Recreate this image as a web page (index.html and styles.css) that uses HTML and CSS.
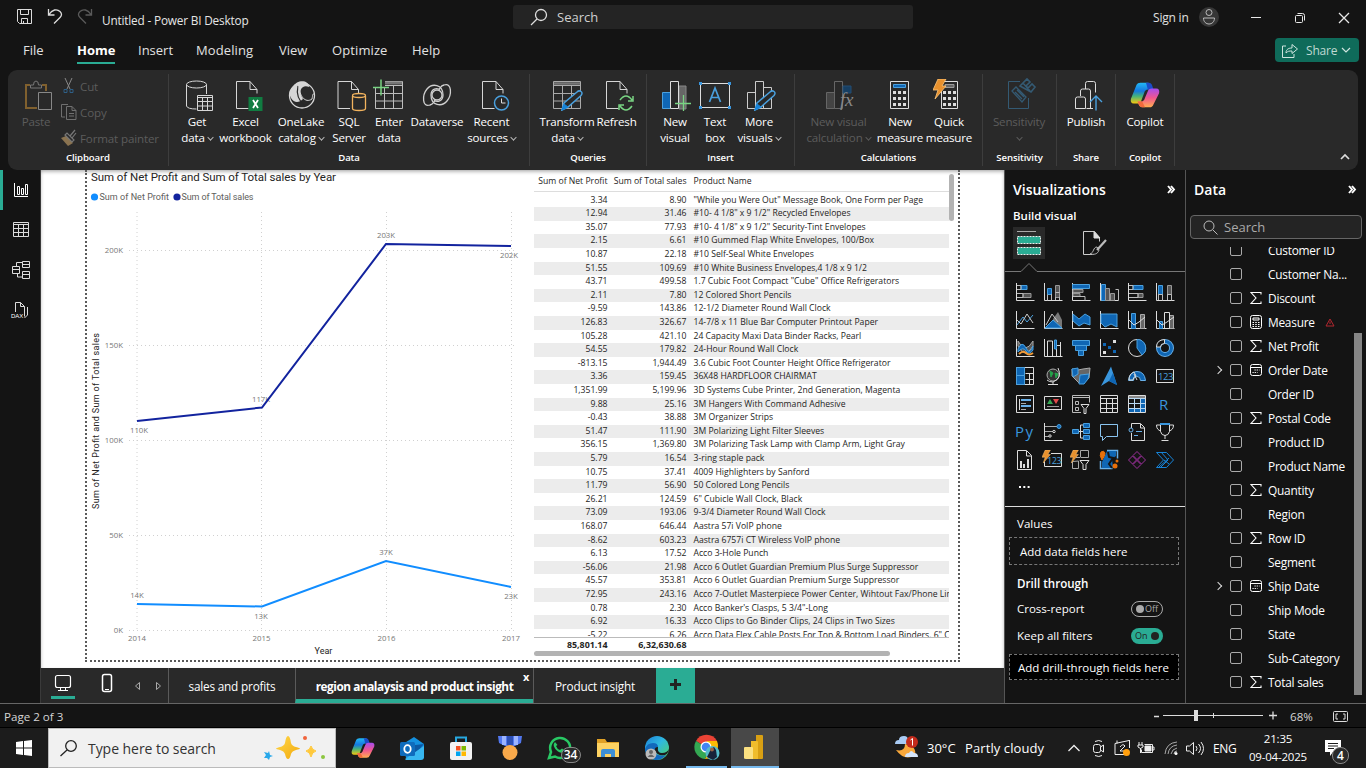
FILE: index.html
```html
<!DOCTYPE html>
<html lang="en">
<head>
<meta charset="utf-8">
<title>Untitled - Power BI Desktop</title>
<link rel="stylesheet" href="styles.css">
</head>
<body>
<svg class="defs" width="0" height="0">
<defs>
<linearGradient id="cpA" x1="0" y1="0" x2="0" y2="1"><stop offset="0" stop-color="#22b8f5"/><stop offset=".4" stop-color="#1578e0"/><stop offset=".65" stop-color="#46b37a"/><stop offset="1" stop-color="#f6c90e"/></linearGradient>
<linearGradient id="cpB" x1="0" y1="0" x2="0" y2="1"><stop offset="0" stop-color="#a44cf0"/><stop offset=".5" stop-color="#f0568f"/><stop offset="1" stop-color="#ffae50"/></linearGradient>
<linearGradient id="gold" x1="0" y1="0" x2="1" y2="1"><stop offset="0" stop-color="#ffd84a"/><stop offset="1" stop-color="#f2a90c"/></linearGradient>
<linearGradient id="edge" x1="0" y1="0" x2="1" y2="1"><stop offset="0" stop-color="#1c7fd8"/><stop offset=".45" stop-color="#2fb8e0"/><stop offset="1" stop-color="#52d35a"/></linearGradient>
<symbol id="doc" viewBox="0 0 32 32"><path d="M6.500 2.500h13.500l7 8v4M20 2.500v8h7M6.500 2.500v27h12" fill="none" stroke="#d6d6d6"/></symbol>
<symbol id="sigma" viewBox="0 0 12 12"><path d="M11 2.500v-2H1l5 5.500-5 5.500h10v-2" fill="none" stroke="#fff" stroke-width="1.100"/></symbol>
<symbol id="calc" viewBox="0 0 12 14"><rect x=".5" y=".5" width="11" height="13" rx="2" fill="none" stroke="#fff"/><path d="M3 3h6v2H3z" fill="none" stroke="#fff"/><path d="M2.500 7.500h7M2.500 9.500h7M2.500 11.500h7" stroke="#fff" stroke-dasharray="1.500 1.250"/></symbol>
<symbol id="cal" viewBox="0 0 12 12"><rect x=".5" y=".5" width="11" height="11" rx="2" fill="none" stroke="#fff"/><path d="M.5 3.500h11" stroke="#fff"/><path d="M4.500 6h5M2.500 8.500h5" stroke="#fff" stroke-dasharray="1.200 1"/></symbol>
<symbol id="copilot" viewBox="0 0 32 28"><path d="M7 3Q8 1 11 1h8q3 0 4 4l1 3h-5q-3 0-4 4l-3 8q-1 3-4 3H4q-4 0-3-5z" fill="url(#cpA)"/><path d="M17 1h3q3 0 4 4l1 3h-6q-1-4-2-7z" fill="#1b4cc9"/><path d="M25 24q-1 3-4 3h-8q-3 0-4-4l-1-2h4q3 0 4-4l3-7q1-3 4-3h5q4 0 3 5z" fill="url(#cpB)"/><path d="M13 27q-3 0-4-4l-1-2h5l3 6z" fill="#f06a3c"/></symbol>
<symbol id="bolt" viewBox="0 0 14 20"><path d="M5 0h8l-4 7h4L2 20l3-9H0z" fill="#e8912d" stroke="#ffc67a" stroke-width=".8"/></symbol>
<symbol id="pencil" viewBox="0 0 22 21"><path d="M1 20l2-7L16 2q2-2 4-.5t0 4L7 17z" fill="#292929" stroke="#4aa0de" stroke-width="1.500"/><path d="M1 20l2-6 4 3z" fill="#1683d8" stroke="#1683d8"/></symbol>
</defs>
</svg>

<header class="titlebar">
  <svg class="quick" width="80" height="20" viewBox="16 8 80 20" fill="none" stroke="#ddd">
    <path d="M17.500 10.500h14v14h-12l-2-2zM20.500 10.500v5h8v-5M21.500 24v-4.500h6V24M23.500 24v-2"/>
    <path d="M48.500 10v6h6M49 15.500c3-5 8-6 11-3 2 2 2 4 0 6l-6 6" stroke-width="1.300"/>
    <path d="M91.500 10v6h-6M91 15.500c-3-5-8-6-11-3-2 2-2 4 0 6l6 6" stroke="#5a5a5a" stroke-width="1.300"/>
  </svg>
  <span class="apptitle">Untitled - Power BI Desktop</span>
  <div class="topsearch"><svg width="18" height="18" viewBox="0 0 18 18" fill="none" stroke="#ddd" stroke-width="1.300"><circle cx="11" cy="7" r="5.500"/><path d="M7 11l-6 6"/></svg><span>Search</span></div>
  <span class="signin">Sign in</span>
  <svg class="winctl" width="160" height="34" viewBox="1198 0 160 34" fill="none" stroke="#e8e8e8">
    <circle cx="1209" cy="17" r="10" fill="#363636" stroke="none"/><circle cx="1209" cy="12.500" r="3" stroke="#bbb"/><path d="M1203.500 18h11c0 8-11 8-11 0z" stroke="#bbb"/>
    <path d="M1251 17.500h10"/><rect x="1295.500" y="15.500" width="7" height="7" rx="1"/><path d="M1297.500 13.500h5q2 0 2 2v5"/><path d="M1339 13l10 10M1349 13l-10 10" stroke-width="1.300"/>
  </svg>
</header>

<nav class="menu">
  <span class="m1">File</span><b class="m2">Home</b><span class="m3">Insert</span><span class="m4">Modeling</span><span class="m5">View</span><span class="m6">Optimize</span><span class="m7">Help</span>
  <div class="share"><svg width="17" height="15" viewBox="0 0 17 15" fill="none" stroke="#cfe5df"><path d="M4 3H.5v11.500H12V11M4 10c0-4 3-5 6-5V1.500L15.500 6 10 10.500V8c-3 0-4 0-6 2z"/></svg><span>Share</span><svg width="10" height="7" viewBox="0 0 10 7" fill="none" stroke="#cfe5df" stroke-width="1.200"><path d="M1 1l4 4 4-4"/></svg></div>
</nav>

<section class="ribbon">
  <div class="group g-clip">
    <div class="tools">
      <div class="btn off w48"><svg width="32" height="32" viewBox="0 0 32 32" fill="none"><path d="M10 6H6v23h11M22 6h4v6" stroke="#80602e" stroke-width="2"/><path d="M10.500 9V6h3q0-4 2.500-4t2.500 4h3v3z" stroke="#777"/><path d="M18.500 13.500h13v17h-13z" stroke="#888" fill="#292929"/></svg><span>Paste</span></div>
      <div class="mini">
        <div><svg width="17" height="18" viewBox="0 0 17 18" fill="none"><path d="M5 1l5 11M12 1L7 12" stroke="#888"/><path d="M4 12.500h3v3H4zM10 12.500h3v3h-3z" stroke="#2f5f86"/></svg>Cut</div>
        <div><svg width="17" height="18" viewBox="0 0 17 18" fill="none" stroke="#707070"><path d="M5 14H1.500V1.500H8M6.500 3.500H12l4 4v9H6.500zM12 3.500v4h4M9 10.500h5M9 13h5"/></svg>Copy</div>
        <div><svg width="17" height="18" viewBox="0 0 17 18" fill="none"><path d="M1 9l7 8 5-3-7-7z" fill="#8a7350"/><path d="M5 6l7 7 2-2-7-7zM10 7l5-6M12 9l4-5" stroke="#777" stroke-width="1.200"/></svg>Format painter</div>
      </div>
    </div>
    <h6>Clipboard</h6>
  </div>
  <div class="group g-data">
    <div class="tools">
      <div class="btn w48"><svg width="32" height="32" viewBox="0 0 32 32" fill="none" stroke="#d6d6d6"><ellipse cx="15.500" cy="5.500" rx="10" ry="3.500"/><path d="M5.500 5.500V27q1 3 10 3M25.500 5.500V15"/><path d="M16.500 16.500h15v15h-15z" fill="#292929"/><path d="M16.500 18.500h15M16.500 22.500h15M16.500 27h15M21.500 18v13M26.500 18v13"/></svg><span>Get</span><span>data<i></i></span></div>
      <div class="btn w49"><svg width="32" height="32" viewBox="0 0 32 32"><use href="#doc"/><path d="M18.500 18h14v14h-14z" fill="#107c41"/><path d="M23 21l5 8M28 21l-5 8" stroke="#fff" stroke-width="1.800"/></svg><span>Excel</span><span>workbook</span></div>
      <div class="btn w62"><svg width="32" height="32" viewBox="0 0 32 32" fill="none"><circle cx="17" cy="16.500" r="12.500" stroke="#d6d6d6" stroke-width="1.300"/><path d="M8 8C12 0 24 1 24 8c-6-3-12 3-6 12-4 4-9 4-12-1-3-6 0-9 2-11z" fill="#d6d6d6"/><path d="M13 7c-2 8 1 15 7 20" stroke="#292929" stroke-width="1.200"/><path d="M14 7c0 9 6 18 13 13 1-4 0-5 2-5" stroke="#d6d6d6"/></svg><span>OneLake</span><span>catalog<i></i></span></div>
      <div class="btn w34"><svg width="32" height="32" viewBox="0 0 32 32" fill="none"><use href="#doc" x="-1.500"/><path d="M19.500 17v12.500q0 2 6.500 2t6.500-2V17" stroke="#f2b35e" fill="#292929" stroke-width="1.300"/><ellipse cx="26" cy="16.500" rx="6.500" ry="2" stroke="#f2b35e" fill="#292929" stroke-width="1.300"/></svg><span>SQL</span><span>Server</span></div>
      <div class="btn w46"><svg width="32" height="32" viewBox="0 0 32 32" fill="none" stroke="#bdbdbd"><path d="M2.500 9v20.500h27v-27H12M12 6.500h17M2.500 14.500h27M2.500 22h27M11.500 9v20M20.500 7v22"/><path d="M12 4h17" stroke="#777" stroke-width="3"/><path d="M0 8.500h16M8 .5v16" stroke="#79d483" stroke-width="1.500"/></svg><span>Enter</span><span>data</span></div>
      <div class="btn w50"><svg width="32" height="32" viewBox="0 0 32 32" fill="none" stroke="#d0d0d0" stroke-width="1.300"><circle cx="16" cy="16" r="5"/><path d="M9 26C1 29 1 16 6 10c5-6 16-5 16 6 0 6-6 8-9 5M23 6c8-3 8 10 3 16-5 6-16 5-16-6 0-6 6-8 9-5M9 26c4-1 3-3 5-4M23 6c-4 1-3 3-5 4"/></svg><span>Dataverse</span></div>
      <div class="btn w59"><svg width="32" height="32" viewBox="0 0 32 32" fill="none"><use href="#doc"/><circle cx="25.500" cy="24" r="7" stroke="#4aa0de" stroke-width="1.500" fill="#292929"/><path d="M25.500 19.500V24h4" stroke="#ddd"/></svg><span>Recent</span><span>sources<i></i></span></div>
    </div>
    <h6>Data</h6>
  </div>
  <div class="group g-query">
    <div class="tools">
      <div class="btn w60"><svg width="32" height="32" viewBox="0 0 32 32" fill="none" stroke="#aaa"><path d="M2.500 2.500h27v27h-27zM2.500 6.500h27M2.500 14.500h27M2.500 22h27M11.500 7v22M20.500 7v22"/><path d="M3 4.500h26" stroke="#777" stroke-width="2.500"/><use href="#pencil" x="10" y="11" width="22" height="21"/></svg><span>Transform</span><span>data<i></i></span></div>
      <div class="btn w39"><svg width="32" height="32" viewBox="0 0 32 32" fill="none"><use href="#doc" x="-1"/><path d="M18 17h14v15H18z" fill="#292929"/><g stroke="#79d483" stroke-width="1.500"><path d="M19 21q6-8 12 0M32 17v5h-5M31 27q-6 8-12 0M18 31v-5h5"/></g></svg><span>Refresh</span></div>
    </div>
    <h6>Queries</h6>
  </div>
  <div class="group g-insert">
    <div class="tools">
      <div class="btn w40"><svg width="32" height="32" viewBox="0 0 32 32" fill="none"><path d="M20 7h7v23h-7z" fill="#666" stroke="#888"/><path d="M3.500 13.500h8v16h-8z" fill="#0f66b4" stroke="#4aa0de"/><path d="M11.500 2.500h8v27h-8z" fill="#292929" stroke="#ddd"/><path d="M16 24.500h16M24.500 16v16" stroke="#79d483" stroke-width="1.300"/></svg><span>New</span><span>visual</span></div>
      <div class="btn w40"><svg width="32" height="32" viewBox="0 0 32 32" fill="none"><path d="M1.500 4.500h29v24h-29z" stroke="#ddd"/><path d="M0 3h3v3H0zM29 3h3v3h-3zM0 27h3v3H0zM29 27h3v3h-3z" fill="#3a96dd"/><path d="M10.500 23l5.500-14 5.500 14M12.500 18.500h7" stroke="#4aa0de" stroke-width="1.700"/></svg><span>Text</span><span>box</span></div>
      <div class="btn w48"><svg width="32" height="32" viewBox="0 0 32 32" fill="none" stroke="#ccc"><path d="M4.500 13.500h8v16h-8zM12.500 2.500h8v27h-8zM20.500 8.500h8v21h-8z"/><use href="#pencil" x="11" y="11" width="22" height="21"/></svg><span>More</span><span>visuals<i></i></span></div>
    </div>
    <h6>Insert</h6>
  </div>
  <div class="group g-calc">
    <div class="tools">
      <div class="btn off w75"><svg width="32" height="32" viewBox="0 0 32 32" fill="none" stroke="#666"><path d="M3.500 13.500h8v16h-8z" fill="#444"/><path d="M11.500 2.500h8v27h-8z" fill="#292929"/><path d="M20 7h8v7h-8z" fill="#173f63" stroke="#244f75"/><text x="17" y="27" class="fx">fx</text></svg><span>New visual</span><span>calculation<i></i></span></div>
      <div class="btn w48"><svg width="32" height="32" viewBox="0 0 32 32" fill="none"><path d="M6.500 2.500h18v27h-18z" stroke="#ddd"/><path d="M9.500 5.500h12v3h-12z" fill="#0f66b4" stroke="#4aa0de"/><path d="M9 13.500h13M9 19.500h13M9 25.500h13" stroke="#ddd" stroke-width="3" stroke-dasharray="3 2"/></svg><span>New</span><span>measure</span></div>
      <div class="btn w50"><svg width="32" height="32" viewBox="0 0 32 32" fill="none"><path d="M8.500 2.500h16v27h-16z" stroke="#ddd"/><path d="M12 5.500h9v3h-9z" fill="#666" stroke="#999"/><path d="M10 13.500h13M10 19.500h13M10 25.500h13" stroke="#ddd" stroke-width="3" stroke-dasharray="3 2"/><use href="#bolt" x="0" y="0" width="14" height="20"/></svg><span>Quick</span><span>measure</span></div>
    </div>
    <h6>Calculations</h6>
  </div>
  <div class="group g-sens">
    <div class="tools"><div class="btn off w72"><svg width="32" height="32" viewBox="0 0 32 32" fill="none" stroke="#345a73"><path d="M17 2.500H5.500v27h20V19"/><path d="M9 12l4-4 10 10-4 5zM12 13l7 7M14 11l7 7" stroke-width="1.300"/><path d="M17 7l7-7 3 3-4 4 2 2 4-4 3 3-4 5zM20 4l7 8" stroke-width="1.600"/></svg><span>Sensitivity</span><span class="solo"><i></i></span></div></div>
    <h6>Sensitivity</h6>
  </div>
  <div class="group g-pub">
    <div class="tools"><div class="btn w58"><svg width="32" height="32" viewBox="0 0 32 32" fill="none" stroke="#ddd"><path d="M5.500 29.500V20q0-2 2-2h6q2 0 2 2v9.500zM10.500 17v-5q0-2 2-2h6q2 0 2 2v17.500h-4M15.500 10V4.500q0-2 2-2h6q2 0 2 2v9M20 29.500h3"/><path d="M26 31.500V17M20 23l6-6 6 6" stroke="#4aa0de" stroke-width="1.400"/></svg><span>Publish</span></div></div>
    <h6>Share</h6>
  </div>
  <div class="group g-pub">
    <div class="tools"><div class="btn w58"><svg width="32" height="32" viewBox="0 0 32 32"><use href="#copilot" x="1" y="2" width="30" height="28"/></svg><span>Copilot</span></div></div>
    <h6>Copilot</h6>
  </div>
  <div class="group last"><svg width="10" height="7" viewBox="0 0 10 7" fill="none" stroke="#ddd" stroke-width="1.700"><path d="M1 6l4-4 4 4"/></svg></div>
</section>

<main class="work">
  <aside class="rail">
    <svg width="41" height="160" viewBox="0 170 41 160" fill="none" stroke="#ddd">
      <path d="M0 170h3v40H0z" fill="#2aac94" stroke="none"/>
      <path d="M14.500 183v13.500H28M17.500 186.500h2v8h-2zM21.500 188.500h2v6h-2zM25.500 184.500h2v10h-2z" stroke="#fff"/>
      <path d="M13.500 222.500h15v14h-15zM13.500 224.500h15M13.500 228.500h15M13.500 232.500h15M18.500 224v12M23.500 224v12"/>
      <path d="M12.500 266.500h7v7h-7zM12.500 269.500h7M22.500 261.500h7v6h-7zM22.500 264.500h7M22.500 271.500h7v7h-7zM22.500 274.500h7M16.500 266v-3.500h6M17.500 274v3h5"/>
      <path d="M15.500 312v-9.500h5l4 4v10M20.500 302.500v4h4M27.500 307v8l-3 3"/><text x="11" y="318" class="dax">DAX</text>
    </svg>
  </aside>

  <section class="center">
    <div class="canvas">
      <div class="page">
        <svg class="chart" width="446" height="489" viewBox="87 170 446 489">
          <text class="ttl" x="91" y="181" textLength="245">Sum of Net Profit and Sum of Total sales by Year</text>
          <circle cx="94.500" cy="197" r="3.600" fill="#118dff"/><text class="leg" x="99.500" y="200" textLength="69.500">Sum of Net Profit</text>
          <circle cx="177" cy="197" r="3.600" fill="#12239e"/><text class="leg" x="181.500" y="200" textLength="72">Sum of Total sales</text>
          <path d="M129 250.500h386M129 345.500h386M129 440.500h386M129 535.500h386M129 630.500h386M137 212v418M261.500 212v418M386.500 212v418M511.500 212v418" stroke="#d0d0d0" stroke-dasharray="1 3" fill="none"/>
          <g class="ax" text-anchor="end"><text x="123" y="253">200K</text><text x="123" y="348">150K</text><text x="123" y="443">100K</text><text x="123" y="538">50K</text><text x="123" y="633">0K</text></g>
          <g class="ax" text-anchor="middle"><text x="137" y="641">2014</text><text x="261.500" y="641">2015</text><text x="386.500" y="641">2016</text><text x="511" y="641">2017</text>
          <text x="139" y="433">110K</text><text x="261" y="402">117K</text><text x="386" y="238">203K</text><text x="509" y="258">202K</text><text x="137" y="598">14K</text><text x="261" y="619">13K</text><text x="386" y="555">37K</text><text x="511" y="599">23K</text></g>
          <text class="axt" x="323.500" y="654" text-anchor="middle">Year</text>
          <text class="axt" transform="translate(99 509) rotate(-90)" textLength="176">Sum of Net Profit and Sum of Total sales</text>
          <path d="M137 421L262 407.500 386 244l125 2" fill="none" stroke="#12239e" stroke-width="2"/>
          <path d="M137 604l125 2.500L386 561l125 26" fill="none" stroke="#118dff" stroke-width="2"/>
        </svg>
        <div class="tablebox">
          <div class="thead"><span>Sum of Net Profit</span><span>Sum of Total sales</span><span>Product Name</span></div>
          <table><tbody>
<tr><td>3.34<td>8.90<td>"While you Were Out" Message Book, One Form per Page
<tr><td>12.94<td>31.46<td>#10- 4 1/8" x 9 1/2" Recycled Envelopes
<tr><td>35.07<td>77.93<td>#10- 4 1/8" x 9 1/2" Security-Tint Envelopes
<tr><td>2.15<td>6.61<td>#10 Gummed Flap White Envelopes, 100/Box
<tr><td>10.87<td>22.18<td>#10 Self-Seal White Envelopes
<tr><td>51.55<td>109.69<td>#10 White Business Envelopes,4 1/8 x 9 1/2
<tr><td>43.71<td>499.58<td>1.7 Cubic Foot Compact "Cube" Office Refrigerators
<tr><td>2.11<td>7.80<td>12 Colored Short Pencils
<tr><td>-9.59<td>143.86<td>12-1/2 Diameter Round Wall Clock
<tr><td>126.83<td>326.67<td>14-7/8 x 11 Blue Bar Computer Printout Paper
<tr><td>105.28<td>421.10<td>24 Capacity Maxi Data Binder Racks, Pearl
<tr><td>54.55<td>179.82<td>24-Hour Round Wall Clock
<tr><td>-813.15<td>1,944.49<td>3.6 Cubic Foot Counter Height Office Refrigerator
<tr><td>3.36<td>159.45<td>36X48 HARDFLOOR CHAIRMAT
<tr><td>1,351.99<td>5,199.96<td>3D Systems Cube Printer, 2nd Generation, Magenta
<tr><td>9.88<td>25.16<td>3M Hangers With Command Adhesive
<tr><td>-0.43<td>38.88<td>3M Organizer Strips
<tr><td>51.47<td>111.90<td>3M Polarizing Light Filter Sleeves
<tr><td>356.15<td>1,369.80<td>3M Polarizing Task Lamp with Clamp Arm, Light Gray
<tr><td>5.79<td>16.54<td>3-ring staple pack
<tr><td>10.75<td>37.41<td>4009 Highlighters by Sanford
<tr><td>11.79<td>56.90<td>50 Colored Long Pencils
<tr><td>26.21<td>124.59<td>6" Cubicle Wall Clock, Black
<tr><td>73.09<td>193.06<td>9-3/4 Diameter Round Wall Clock
<tr><td>168.07<td>646.44<td>Aastra 57i VoIP phone
<tr><td>-8.62<td>603.23<td>Aastra 6757i CT Wireless VoIP phone
<tr><td>6.13<td>17.52<td>Acco 3-Hole Punch
<tr><td>-56.06<td>21.98<td>Acco 6 Outlet Guardian Premium Plus Surge Suppressor
<tr><td>45.57<td>353.81<td>Acco 6 Outlet Guardian Premium Surge Suppressor
<tr><td>72.95<td>243.16<td>Acco 7-Outlet Masterpiece Power Center, Wihtout Fax/Phone Line Protection
<tr><td>0.78<td>2.30<td>Acco Banker's Clasps, 5 3/4"-Long
<tr><td>6.92<td>16.33<td>Acco Clips to Go Binder Clips, 24 Clips in Two Sizes
<tr><td>-5.22<td>6.26<td>Acco Data Flex Cable Posts For Top &amp; Bottom Load Binders, 6" Capacity
          </tbody></table>
          <div class="total"><span>85,801.14</span><span>6,32,630.68</span></div>
          <div class="hbar"></div>
        </div>
        <div class="vbar"></div>
      </div>
    </div>
    <div class="tabs">
      <svg width="127" height="35" viewBox="41 668 127 35" fill="none" stroke="#fff">
        <rect x="55.500" y="675.500" width="15" height="12" rx="2" stroke-width="1.200"/><path d="M58 690.500h10M60.500 688v2M65.500 688v2"/><path d="M51 697.500h24" stroke="#2aac94" stroke-width="3"/>
        <rect x="102.500" y="674.500" width="9" height="17" rx="2" stroke-width="1.500"/><path d="M105 689.500h4"/>
        <path d="M139.500 682.500v7l-4-3.500zM156.500 682.500v7l4-3.500z" stroke="#aaa"/>
      </svg>
      <span class="tab t1">sales and profits</span><b class="tab t2">region analaysis and product insight<em>x</em></b><span class="tab t3">Product insight</span><span class="plus"></span>
    </div>
  </section>

  <aside class="viz">
    <div class="phead"><span>Visualizations</span><svg width="9" height="9" viewBox="0 0 9 9" fill="none" stroke="#fff" stroke-width="1.900"><path d="M1 1l3 3.500L1 8M4 1l3 3.500L4 8"/></svg></div>
    <h5>Build visual</h5>
    <svg class="vicons" width="180" height="276" viewBox="1005 225 180 276" fill="none" stroke="#ddd" stroke-width="1">
      <path d="M1013 227h32v32h-32z" fill="#292929" stroke="none"/><path d="M1017 231.500h19" stroke="#aaa"/><path d="M1017.500 236.500h23v7h-23zM1017.500 247.500h23v7h-23z" fill="#2aac94" stroke="#eee" stroke-dasharray="2 1"/>
      <path d="M1092 254.500h-8.500v-23h11l5 6v4" stroke="#ccc"/><path d="M1094 231.500v6.500h6z" fill="#ddd"/><path d="M1106 240l-9 10" stroke="#bbb" stroke-width="2.200"/><path d="M1097 247c-4 0-3 6-7 7 4 1 8 0 9-4z" stroke="#bbb"/>
      <path d="M1005 271.500h16l8-8 8 8h148" stroke="#777"/>
      <!-- bars and columns -->
      <path d="M1016.500 283v17.500h18M1044.500 283v17.500h18M1072.500 283v17.500h18M1100.500 283v17.500h18M1128.500 283v17.500h18M1156.500 283v17.500h18"/>
      <g fill="#0f66b4" stroke="#4aa0de"><path d="M1021 285.500h6v4h-6zM1047.500 288.500h4v6h-4zM1072.500 284.500h17v4h-17zM1101.500 284.500h4v16h-4zM1133 285.500h10v4h-10zM1158.500 285.500h4v9h-4z"/></g>
      <g fill="#555" stroke="#999"><path d="M1023 293.500h8v4h-8zM1055.500 285.500h4v12h-4zM1073 289.500h10v3h-10zM1073 293.500h7v3h-7zM1105.500 288.500h4v12h-4zM1110.500 293.500h4v7h-4zM1138 293.500h5v4h-5zM1167.500 285.500h4v9h-4z"/></g>
      <path d="M1017 285.500h4v4h-4M1017 293.500h6v4h-6M1073 296.500h12v4M1115.500 289.500h3v11M1129 285.500h4v4h-4M1129 293.500h9v4h-9M1158.500 294.500h4v6M1158.500 294v6M1167.500 294.500h4v6M1167.500 294v6M1047.500 294.500v6M1051.500 294v6M1055.500 292.500h4M1055.500 297v3M1059.500 297v3" stroke="#bbb"/>
      <!-- lines and areas -->
      <path d="M1016.500 311v17.500h18M1044.500 311v17.500h18M1072.500 311v17.500h18M1100.500 311v17.500h18M1128.500 311v17.500h18M1156.500 311v17.500h18"/>
      <path d="M1017 325l6-8 4 5 6-7" stroke="#4aa0de"/><path d="M1017 320l4 4 6-10 6 9" stroke="#ccc"/>
      <path d="M1053 319l5-7 4 8v8h-9z" fill="#777" stroke="none"/><path d="M1046 325l6-11 6 8" stroke="#ccc"/><path d="M1045 328l8-8 9 8z" fill="#0f66b4" stroke="#4aa0de"/>
      <path d="M1073 314l6 5 6-5 5 3v8l-6-2-5 3-6-5zM1101 314h16v13l-6-3-6 3-4-4z" fill="#0f66b4" stroke="#4aa0de"/>
      <path d="M1131.500 313.500h4v15h-4zM1159.500 321.500h3v7h-3z" fill="#0f66b4" stroke="#4aa0de"/><path d="M1140.500 314.500h4v14h-4zM1169.500 315.500h4v13h-4z" fill="#666" stroke="#aaa"/><path d="M1164.500 312.500h5v16h-5zM1129 320l5 5 5-3 6-5M1157 320l5 5 5-3 7-5" stroke="#ddd"/>
      <!-- ribbon, waterfall, funnel, scatter, pie, donut -->
      <path d="M1016.500 339v17.500h18M1044.500 339v17.500h18"/>
      <path d="M1018 341q7 14 15 0v5q-8 14-15 0z" fill="#555" stroke="#aaa"/><path d="M1018 349q4-9 8-1t7-2v4q-4 6-7 1t-8 1z" fill="#0f66b4" stroke="#4aa0de"/><path d="M1019 354q4-4 7-1t7 0" stroke="#f19a36" stroke-width="2"/>
      <path d="M1047.500 356v-15h5v15M1056.500 345.500v11M1060.500 342v14M1056.500 345.500h4" stroke="#ddd"/><path d="M1054.500 340v9h2v-9z" fill="#0f66b4" stroke="#4aa0de"/>
      <g fill="#0f66b4" stroke="#4aa0de"><path d="M1072.500 340.500h17v5h-17zM1075.500 345.500h11v5h-11zM1078.500 350.500h5v5h-5z"/></g>
      <path d="M1100.500 339v17.500h18"/><path d="M1103 343h3v3h-3zM1108 346h3v3h-3zM1113 350h3v3h-3z" fill="#0f66b4" stroke="none"/><path d="M1113 340h3v3h-3zM1103 351h3v3h-3z" fill="#ddd" stroke="none"/>
      <circle cx="1137" cy="348" r="8.500"/><path d="M1137 339.500a8.500 8.500 0 0 1 5 15.500l-5-7z" fill="#0f66b4" stroke="#4aa0de"/>
      <circle cx="1165" cy="348" r="6.500" stroke="#69b0e8" stroke-width="5"/><circle cx="1165" cy="348" r="6.500" stroke="#0f66b4" stroke-width="3"/><path d="M1158.500 347q0-5 6-5.500" stroke="#141414" stroke-width="4"/><path d="M1156.500 347q0-7 8-7.500v4q-4 0-4 3.500z"/>
      <!-- treemap, maps, gauge, card -->
      <path d="M1016.500 367.500h17v17h-17zM1025.500 373.500h8M1029.500 373.500v11M1025.500 379.500h8"/><path d="M1016.500 367.500h8v8h-8zM1016.500 375.500h8v9h-8z" fill="#0f66b4" stroke="#4aa0de"/>
      <circle cx="1053" cy="375" r="6" fill="#333" stroke="#aaa"/><path d="M1058 368q5 10-5 14-4 0-6-2M1053 382v3M1048 384.500h10"/><path d="M1050 371l3 2-2 4zM1055 373l3 1-2 4z" fill="#24a34a" stroke="#24a34a"/>
      <path d="M1072 369l6 1 5-1 7-1-1 10-5 5h-5l-7-7z" fill="#666" stroke="#aaa"/><path d="M1072 369l6-1v6l-5 3zM1080 375l9-1-1 5-4 5h-5z" fill="#0f66b4" stroke="#4aa0de"/>
      <path d="M1111 366.500L1117 385l-8-4-8 5z" fill="#3a96dd" stroke="none"/><path d="M1109 381l8 4-4-12z" fill="#0f66b4" stroke="none"/>
      <path d="M1128.500 380.500q1-9 8.500-9t8.500 9h-5q0-4-3.500-4t-3.500 4z" fill="#0f66b4" stroke="#69b0e8"/><path d="M1129 380h4q0-3 3-4l-2-4q-5 2-5 8M1137 380l-3-6" stroke="#ddd"/>
      <path d="M1156.500 369.500h17v13h-17z"/><text class="n123" x="1158" y="380">123</text>
      <!-- cards, slicer, tables, script visuals -->
      <path d="M1016.500 395.500h17v17h-17zM1019.500 399v11"/><path d="M1021 400h10M1021 406h10" stroke="#69b0e8" stroke-width="2"/><path d="M1021 403.500h5M1021 409.500h5" stroke="#aaa"/>
      <path d="M1044.500 396.500h17v13h-17z"/><path d="M1047 404l3-5 3 5z" fill="#32a852" stroke="none"/><path d="M1053 399h6l-3 5z" fill="#e34b4b" stroke="none"/><path d="M1047 406.500h12" stroke="#999"/>
      <path d="M1081 412.500h-8.500v-17h17v7M1073 397.500h16M1075.500 401.500h3v3h-3zM1075.500 407.500h3v3h-3z" stroke="#bbb"/><path d="M1081 404.500h8l-3 4v5h-2v-5z"/>
      <path d="M1100.500 395.500h17v17h-17zM1100.500 398.500h17M1100.500 403.500h17M1100.500 408.500h17M1106.500 398v14M1112.500 398v14"/>
      <path d="M1128.500 395.500h17v17h-17z"/><path d="M1140 398h5v14h-16v-4h11z" fill="#0f66b4" stroke="none"/><path d="M1129 396h16v2h-16z" fill="#888" stroke="none"/><path d="M1128.500 398.500h17M1128.500 403.500h17M1128.500 408.500h17M1134.500 398v14M1140.500 398v14" stroke="#b8d8f2"/>
      <text class="let" x="1159" y="410">R</text><text class="let" x="1015" y="437" textLength="18">Py</text>
      <!-- key influencers, tree, Q&A, narrative, goals -->
      <path d="M1044.500 423v17.500h18"/><path d="M1045 426.500h12M1045 431.500h8M1045 436.500h4" stroke="#aaa"/><circle cx="1059" cy="426.500" r="2" fill="#0f66b4" stroke="#4aa0de"/><circle cx="1054" cy="431.500" r="1.200"/><circle cx="1050" cy="436" r="1.200"/>
      <path d="M1078 431.500h5M1080.500 431v-6h3M1080.500 431v7h3"/><path d="M1072.500 429.500h6v4h-6zM1083.500 423.500h6v4h-6zM1083.500 429.500h6v4h-6zM1083.500 435.500h6v4h-6z" fill="#0f66b4" stroke="#4aa0de"/>
      <path d="M1100.500 424.500h17v12h-11l-4 4v-4h-2z" stroke="#8ac4f0"/>
      <path d="M1131.500 428v-4.500h9l4 4v13h-13V433M1140.500 424v4h4"/><circle cx="1131" cy="430" r="2" stroke="#69b0e8"/><path d="M1136 431.500h6M1134 435.500h4" stroke="#69b0e8"/>
      <path d="M1160.500 423.500h9v8q-1 4-4.500 4t-4.500-4zM1160 425h-3.500q0 5 4.500 6M1170 425h3.500q0 5-4.500 6M1165 435v4M1161.500 440.500h7"/><path d="M1160 424h10" stroke="#3a96dd" stroke-width="2"/>
      <!-- paginated report, new cards, apps -->
      <path d="M1017.500 450.500h9l5 5v14h-14zM1026.500 451v5h5"/><path d="M1021 461v7M1024 464v4M1028 459v9" stroke-width="2"/>
      <path d="M1051 453.500h10.500v13h-17v-5"/><text class="n123 sm" x="1047" y="464">123</text><use href="#bolt" x="1042" y="450" width="9" height="13"/>
      <path d="M1080.500 457v-6.500h8v7h-8M1078.500 461v7.500h-6v-7zM1080 457.500h-4" stroke="#aaa"/><path d="M1080 460.500h9l-3 4v5h-3v-5z"/><use href="#bolt" x="1070" y="450" width="9" height="13"/>
      <path d="M1107 450.500h10.500v8M1100.500 461v7.500h12" stroke="#69b0e8" stroke-width="1.500"/><path d="M1107 451h9v5l-4 3 1 9h-11v-6z" fill="#0f66b4" stroke="none"/><path d="M1108 452l1 5 4 1-4 6 3 4" stroke="#141414" stroke-width="2"/><path d="M1102 460q-3-5-1-8 3-2 4 1 0 3-3 7z" fill="#e8700a" stroke="#e8700a"/><circle cx="1115" cy="466" r="2.500" fill="#e8700a" stroke="none"/><circle cx="1117" cy="461" r="1.500" fill="#e8700a" stroke="none"/>
      <path d="M1137 451.500l4 4-4 4-4-4zM1137 460.500l4 4-4 4-4-4zM1132.500 456l4 4-4 4-4-4zM1141.500 456l4 4-4 4-4-4z" stroke="#9b2f9b"/>
      <path d="M1156.500 452.500h10l7 7.500-7 7.500h-10l7-7.500zM1161 452l7 8-7 7M1164 460l5 4M1159 467l10-9" stroke="#1683d8"/>
      <path d="M1019 487h11" stroke="#fff" stroke-width="2" stroke-dasharray="2 2.300"/>
    </svg>
    <div class="wells">
      <p>Values</p>
      <div class="well">Add data fields here</div>
      <h4>Drill through</h4>
      <div class="sw"><span>Cross-report</span><span class="pill offp"><i></i>Off</span></div>
      <div class="sw"><span>Keep all filters</span><span class="pill onp">On<i></i></span></div>
      <div class="well dark">Add drill-through fields here</div>
    </div>
  </aside>

  <aside class="data">
    <div class="phead"><span>Data</span><svg width="9" height="9" viewBox="0 0 9 9" fill="none" stroke="#fff" stroke-width="1.900"><path d="M1 1l3 3.500L1 8M4 1l3 3.500L4 8"/></svg></div>
    <div class="dsearch"><svg width="15" height="15" viewBox="0 0 15 15" fill="none" stroke="#bbb"><circle cx="6" cy="6" r="5"/><path d="M10 10l4.500 4.500"/></svg>Search</div>
    <div class="lwrap">
    <ul>
      <li><s></s><i></i><u></u>Customer ID</li>
      <li><s></s><i></i><u></u>Customer Na...</li>
      <li><s></s><i></i><u><svg width="12" height="12"><use href="#sigma"/></svg></u>Discount</li>
      <li><s></s><i></i><u><svg width="12" height="14"><use href="#calc"/></svg></u>Measure<svg class="warn" width="10" height="9" viewBox="0 0 10 9" fill="none" stroke="#b3262e"><path d="M5 1l4 7H1zM5 3.500v2.500"/></svg></li>
      <li><s></s><i></i><u><svg width="12" height="12"><use href="#sigma"/></svg></u>Net Profit</li>
      <li><s class="open"></s><i></i><u><svg width="12" height="12"><use href="#cal"/></svg></u>Order Date</li>
      <li><s></s><i></i><u></u>Order ID</li>
      <li><s></s><i></i><u><svg width="12" height="12"><use href="#sigma"/></svg></u>Postal Code</li>
      <li><s></s><i></i><u></u>Product ID</li>
      <li><s></s><i></i><u></u>Product Name</li>
      <li><s></s><i></i><u><svg width="12" height="12"><use href="#sigma"/></svg></u>Quantity</li>
      <li><s></s><i></i><u></u>Region</li>
      <li><s></s><i></i><u><svg width="12" height="12"><use href="#sigma"/></svg></u>Row ID</li>
      <li><s></s><i></i><u></u>Segment</li>
      <li><s class="open"></s><i></i><u><svg width="12" height="12"><use href="#cal"/></svg></u>Ship Date</li>
      <li><s></s><i></i><u></u>Ship Mode</li>
      <li><s></s><i></i><u></u>State</li>
      <li><s></s><i></i><u></u>Sub-Category</li>
      <li><s></s><i></i><u><svg width="12" height="12"><use href="#sigma"/></svg></u>Total sales</li>
    </ul>
    <div class="dbar"></div>
    </div>
  </aside>
</main>

<div class="status"><span>Page 2 of 3</span>
  <svg width="130" height="14" viewBox="1150 709 130 14" stroke="#ddd" fill="none"><path d="M1154 716.500h5M1269 715.500h8M1273 711.500v8" stroke-width="1.300"/><path d="M1163 715.500h100M1213.500 713v5"/><path d="M1196 710v11" stroke-width="4"/></svg>
  <span class="zoom">68%</span>
  <svg width="15" height="11" viewBox="0 0 15 11" fill="none" stroke="#ddd"><rect x=".5" y=".5" width="14" height="10" rx="1"/><path d="M5 3H3v5h2M10 3h2v5h-2"/></svg>
</div>

<footer class="taskbar">
  <div class="start"><svg width="16" height="16" viewBox="0 0 16 16" fill="#fff"><path d="M0 2l7-1v6.500H0zM8 1l8-1v7.500H8zM0 8.500h7V15l-7-1zM8 8.500h8V16l-8-1z"/></svg></div>
  <div class="tsearch"><svg width="18" height="17" viewBox="0 0 18 17" fill="none" stroke="#222" stroke-width="1.300"><circle cx="11" cy="6" r="5.300"/><path d="M7 10l-6.500 6"/></svg><span>Type here to search</span>
    <svg width="64" height="26" viewBox="263 735 64 26"><path d="M288 736q2 0 3 7 1 3 5 4 4 1 4 1.500t-4 1.500q-4 1-5 4-1 5-3 5t-3-5q-1-3-5-4-4-1-4-1.500t4-1.500q4-1 5-4 1-7 3-7z" fill="url(#gold)"/><path d="M311 746q1 4 5 5-4 1-5 6-1-5-5-6 4-1 5-5z" fill="#ffc93c" stroke="#ffc93c"/><path d="M269 751l1 4 3 1-3 1-1 3-2-2-3 0 2-3-2-3 4 1z" fill="#28a8ea"/><circle cx="305" cy="738" r="2" fill="#f0643c"/><circle cx="323" cy="757" r="2" fill="#8cc63f"/></svg></div>
  <div class="apps">
    <div><svg width="24" height="24" viewBox="0 0 32 28"><use href="#copilot"/></svg></div>
    <div><svg width="24" height="24" viewBox="0 0 24 24"><path d="M3 8L14 1l10 7v14H6z" fill="#1490df"/><path d="M7 10l17-2-8 9z" fill="#0c59a4"/><path d="M5 23l19-13v11q0 3-3 3H6z" fill="#38b7f0"/><rect y="6" width="15" height="14" rx="1.500" fill="#0f6cbd"/><ellipse cx="7.500" cy="13" rx="3.200" ry="3.800" fill="none" stroke="#fff" stroke-width="1.800"/></svg></div>
    <div><svg width="24" height="24" viewBox="0 0 24 24"><path d="M7 8V1.500h10V8" fill="none" stroke="#27a8e0" stroke-width="2"/><rect x="1" y="6" width="22" height="18" rx="2" fill="#f2f2f2"/><path d="M7 10h4.500v4.500H7z" fill="#f25022"/><path d="M12.500 10H17v4.500h-4.500z" fill="#7fba00"/><path d="M7 15.500h4.500V20H7z" fill="#00a4ef"/><path d="M12.500 15.500H17V20h-4.500z" fill="#ffb900"/></svg></div>
    <div><svg width="24" height="24" viewBox="0 0 24 24"><path d="M0 0h24l-1 7-6 3H7L1 7z" fill="#5278f0"/><path d="M4 0h4v9H4zM16 0h4v9h-4z" fill="#9cb4ff"/><path d="M9 0h6v10H9z" fill="#2c4fb5"/><circle cx="12" cy="16.500" r="7.500" fill="#f9a94a"/></svg></div>
    <div class="wa"><svg width="24" height="24" viewBox="0 0 24 24"><path d="M2 22l2-6A10 10 0 1 1 8 20.500z" fill="none" stroke="#28c864" stroke-width="2.500"/><path d="M8 6q-4 4 3 9.500 5 3 7-1l-3-2-2 1.500q-3-1-4-4L10.500 9z" fill="#28c864"/></svg><em>34</em></div>
    <div><svg width="24" height="24" viewBox="0 0 24 24"><path d="M1 3h8l2 3h12v5H1z" fill="#e0a126"/><path d="M1 7h22v14H1z" fill="#fdd262"/><path d="M5 21v-6q0-2 2-2h10q2 0 2 2v6h-4v-3H9v3z" fill="#3d8fd6"/></svg></div>
    <div><svg width="24" height="24" viewBox="0 0 24 24"><circle cx="12" cy="12" r="12" fill="url(#edge)"/><path d="M0 13Q2 7 8 7q5 0 5 4-4 1-3 5 2 5 11 3-4 5-10 5Q1 23 0 13z" fill="#1269bd"/><path d="M13 11q-1 6 4 6 5 0 7-4-1 5-4 6-8 1-10-4-1-4 3-4z" fill="#1b1b1b"/><circle cx="6" cy="18" r="5.500" fill="#bbb"/><circle cx="6" cy="16" r="2" fill="#666"/><path d="M2.500 21q3.500-5 7 0z" fill="#666"/></svg></div>
    <div class="run"><svg width="25" height="25" viewBox="0 0 25 25"><path d="M12 12L2 6a12 12 0 0 1 21 0z" fill="#ea4335"/><path d="M12 12L2 6a12 12 0 0 0 9 18l4-8z" fill="#34a853"/><path d="M12 12l3 5-4 7q8 0 12-8 2-5 0-10H13z" fill="#fbbc05"/><circle cx="12" cy="12" r="5.500" fill="#fff"/><circle cx="12" cy="12" r="4.300" fill="#4285f4"/><circle cx="18.500" cy="18" r="7" fill="#55bccb"/><path d="M13 22l4-8 3-2 2 3 1 7-4 3z" fill="#18233a"/><circle cx="18" cy="14.500" r="2" fill="#9a6547"/></svg></div>
    <div class="run sel"><svg width="24" height="24" viewBox="0 0 24 24"><path d="M13 0h6q1 0 1 1v22q0 1-1 1h-6z" fill="#d9a013"/><path d="M8 6h6q1 0 1 1v17H8z" fill="#f0bd2c"/><path d="M2 12h7q1 0 1 1v11H3q-2 0-2-1V13q0-1 1-1z" fill="#fbe081"/></svg></div>
  </div>
  <svg class="weather" width="26" height="26" viewBox="894 735 26 26"><path d="M897 750q9 2 9-6 12 2 10 11-10 7-19-5z" fill="#f9a83b"/><path d="M896 744q0-4 4-4 0-4 5-4 4 0 4 4 3 0 3 4z" fill="#a9cbf5"/><path d="M906 757q0-4 4-4 2-4 5 0 4 0 4 4z" fill="#d5e5fb"/><circle cx="913" cy="742" r="6" fill="#c42b1c"/><path d="M911.500 740l2-1.500v7" fill="none" stroke="#fff"/></svg>
  <span class="temp">30°C</span><span class="cond">Partly cloudy</span>
  <svg class="tray" width="138" height="24" viewBox="1068 736 138 24" fill="none" stroke="#eee">
    <path d="M1069.500 751l5.500-5.500 5.500 5.500" stroke-width="1.300"/>
    <rect x="1094.500" y="744.500" width="7" height="8" rx="2"/><path d="M1101.500 747l3-2v7l-3-2M1096 741.500q4-2 7 0M1096 755.500q4 2 7 0"/>
    <path d="M1116 743.500l14-3M1116 743.500v11h9M1130.500 740v8M1118 740.500v3M1121 747q3-4 5-1l-5 5h5"/><circle cx="1127.500" cy="752.500" r="3.500" fill="#ff9e0d" stroke="none"/>
    <path d="M1145.500 744.500h8v8h-11v-3M1154 747h1v3h-1M1140 742v3M1143 742v3M1139 745h5v2q-2.500 3-5 0zM1141.500 748v5"/><path d="M1146 746h6v5h-6z" fill="#eee"/>
    <path d="M1166 754q1-11 12-12M1169 754q1-8 9-9M1172 754q1-5 6-6M1175 754q0-3 3-3" stroke="#aaa"/><circle cx="1177" cy="753.500" r="1.500" fill="#fff" stroke="none"/>
    <path d="M1187.500 746v5h3l4 3.500v-12l-4 3.500zM1197 746q2 2.500 0 5M1199.500 744q4 4.500 0 9M1202 742q5 6.500 0 13"/>
  </svg>
  <span class="eng">ENG</span>
  <span class="clock"><span>21:35</span><span>09-04-2025</span></span>
  <div class="note"><svg width="16" height="16" viewBox="0 0 16 16"><path d="M0 0h16v12H8l-3 4v-4H0z" fill="#fff"/><path d="M3 3.500h10M3 6h10M3 8.500h6" stroke="#1c1c1c"/></svg><em>4</em></div>
</footer>
</body>
</html>
```
FILE: styles.css
```css
*{box-sizing:border-box}
body{margin:0;width:1366px;height:768px;overflow:hidden;background:#141414;color:#fff;font-family:"Open Sans","Noto Sans",sans-serif;font-size:12px;display:flex;flex-direction:column;white-space:nowrap}
svg{display:block;flex:none;overflow:visible}
.defs{position:absolute}
.titlebar{height:34px;display:flex;align-items:center;padding-left:16px}
.apptitle{font-size:11.800px;letter-spacing:-.18px;width:411px;padding:6px 0 0 6px;color:#e6e6e6}
.topsearch{width:400px;height:24px;margin-left:6px;background:#242424;border-radius:3px;display:flex;align-items:center;gap:9px;padding-left:17px;color:#d0d0d0;font-size:13px}
.signin{margin-left:240px;width:45px;font-size:12px;color:#e0e0e0;letter-spacing:-.2px}
.menu{height:36px;display:flex;align-items:flex-start;color:#e2e2e2;font-size:13px;padding-left:23px}
.menu>span,.menu>b{height:30px;line-height:32px}
.m1{width:54px}.m2{width:38px;border-bottom:2px solid #2aac94;color:#fff;margin-right:23px}.m3{width:58px}.m4{width:83px;letter-spacing:.1px}.m5{width:53px}.m6{width:80px;letter-spacing:.1px}.m7{width:60px}
.share{margin:4px 7px 0 auto;width:84px;height:24px;background:#0f6b5a;border-radius:4px;display:flex;align-items:center;padding-left:7px;gap:7px;font-size:12px;color:#bfd9d2;letter-spacing:-.2px}
.share span{margin-right:-3px}
.ribbon{height:100px;margin:0 8px;background:#292929;border-radius:9px;display:flex;position:relative;z-index:1}
.group{display:flex;flex-direction:column;height:92px;margin-top:4px;border-left:1px solid #3d3d3d}
.g-clip{width:160px;border:0}.g-data{width:361px;padding-left:4px}.g-query{width:117px;padding-left:7px}.g-insert{width:148px;padding-left:8px}.g-calc{width:188px;padding-left:6px}.g-sens{width:74px}.g-pub{width:59px}
.last{flex:1;align-items:flex-end;justify-content:flex-end;padding:0 8px 6px}
.tools{display:flex;height:77px}
.group h6{margin:0;font-size:9.600px;line-height:13px;text-align:center;font-weight:600;letter-spacing:-.1px}
.g-data h6{margin-left:-4px}.g-query h6{margin-left:-7px}.g-insert h6{margin-left:-8px}.g-calc h6{margin-left:-6px}
.btn{display:flex;flex-direction:column;align-items:center;padding-top:5px;font-size:11.600px;line-height:16px;letter-spacing:-.18px}
.btn svg{margin-bottom:3px}
.btn i{display:inline-block;width:5px;height:5px;border:solid #bbb;border-width:0 1px 1px 0;transform:rotate(45deg) scale(.9);margin:0 0 2px 3px}
.btn .solo i{margin:0 0 2px}
.off{color:#5c5c5c}.off i{border-color:#5c5c5c}
.w34{width:34px}.w39{width:39px}.w40{width:40px}.w46{width:46px}.w48{width:48px}.w49{width:49px}.w50{width:50px}.w58{width:58px}.w59{width:59px}.w60{width:60px}.w62{width:62px}.w72{width:72px}.w75{width:75px}
.g-clip .btn{width:56px}
.fx{font:italic 19px "Liberation Serif",serif;fill:#888;stroke:none}
.n123{font:9.500px "Open Sans",sans-serif;letter-spacing:-.4px;fill:#4aa0de;stroke:none}
.sm{font-size:9px}
.let{font:15px "Open Sans",sans-serif;fill:#3a96dd;stroke:none}
.mini{color:#5c5c5c;font-size:11.600px;letter-spacing:-.15px;display:grid;grid-template-rows:repeat(3,26px);margin:-1px 0 0 -4px}
.mini div{display:flex;align-items:center;gap:3px}
.work{height:533px;display:flex}
.rail{width:41px;border-right:1px solid #3a3a3a}
.dax{font:6px "Liberation Sans",sans-serif;fill:#fff;stroke:none}
.center{width:963px;display:flex;flex-direction:column}
.canvas{height:498px;background:#fff;box-shadow:inset 0 2px 4px -1px #999;overflow:hidden}
.page{margin-left:44px;width:875px;height:492px;display:flex;border:dotted #5a5a5a;border-width:0 2px 2px;color:#252423}
.ttl{font:11.500px Roboto,sans-serif;fill:#252423}
.leg{font:9px Roboto,sans-serif;fill:#605e5c}
.ax{font:7.800px "Open Sans",sans-serif;fill:#777}
.axt{font:9px Roboto,sans-serif;fill:#252423}
.tablebox{width:415px;margin-left:1px;font-size:8.650px;display:flex;flex-direction:column}
.thead{height:22px;display:grid;grid-template-columns:73.500px 79px 1fr;line-height:22px;border-bottom:1px solid #ddd}
.thead span:nth-child(-n+2){text-align:right}
.thead span:nth-child(3),td:nth-child(3){padding-left:7px}
table{display:block;height:446px;overflow:hidden;border-bottom:1px solid #bbb;padding-top:1.700px}
tbody{display:block}
tr{display:grid;grid-template-columns:73.500px 79px 262.500px;height:13.594px;line-height:13.600px}
tr:nth-child(even){background:#ececec}
td{padding:0;overflow:hidden;text-align:right}
td:nth-child(3){text-align:left}
.total{height:13px;display:grid;grid-template-columns:73.500px 79px;font-weight:700;font-size:8.900px;text-align:right;line-height:14px}
.hbar{width:356px;height:5px;border-radius:3px;background:#b3b3b3}
.vbar{width:5px;height:47px;border-radius:3px;background:#b3b3b3;margin-top:4px}
.tabs{height:35px;background:#292929;display:flex}
.tab{border-left:1px solid #5a5a5a;display:flex;align-items:center;justify-content:center;font-size:11.800px;letter-spacing:-.2px;padding-top:1px}
.t1{width:127px}.t2{width:238px;border-bottom:4px solid #2aac94;padding-top:5px;position:relative;letter-spacing:-.45px}.t3{width:123px}
.t2 em{position:absolute;right:4px;top:1px;font-style:normal;font-size:11px}
.plus{width:39px;background:linear-gradient(#222,#222) 50% 15px/11px 3px no-repeat,linear-gradient(#222,#222) 50% 11px/3px 11px no-repeat,#2aac94}
.viz{width:182px;border:solid #555;border-width:0 1px;background:#141414;display:flex;flex-direction:column}
.phead{height:38px;display:flex;align-items:center;justify-content:space-between;padding:0 9px 0 8px;font-weight:600;font-size:14px}
.viz h5{margin:0;height:17px;line-height:16px;padding-left:8px;font-size:11.500px;font-weight:600}
.wells{margin-top:5px;border-top:1px solid #ddd;padding:8px 6px 0 4px;font-size:11.500px}
.wells p,.wells h4{margin:0 0 0 8px;height:22px;line-height:18px;font-size:11.600px;font-weight:400}
.wells h4{font-weight:600;height:22px;line-height:22px;margin-top:8px}
.well{border:1px dashed #777;height:28px;line-height:27px;padding-left:10px}
.dark{background:#000;height:26px;line-height:25px;padding-left:8px;margin-top:5px}
.sw{height:27px;display:flex;align-items:center;justify-content:space-between;padding:0 16px 0 8px}
.pill{width:32px;height:16px;border-radius:8px;display:flex;align-items:center;justify-content:space-between;padding:0 4px;font-size:9px}
.pill i{width:8px;height:8px;border-radius:50%;background:#aaa}
.offp{border:1px solid #aaa;color:#aaa}.onp{background:#2aac94;color:#222}.onp i{background:#222}
.data{width:180px}
.dsearch{margin:7px 4px 0;height:24px;border:1px solid #666;border-radius:4px;background:#242424;display:flex;align-items:center;gap:6px;padding-left:12px;color:#aaa;font-size:13px}
.lwrap{display:flex;height:450px;margin-top:8px;overflow:hidden}
ul{list-style:none;margin:-9px 0 0;padding:0;width:168px;font-size:11.900px}
li{height:24px;display:flex;align-items:center;letter-spacing:-.25px}
li s{width:6px;height:6px;margin:0 10px 0 29px}
li s.open{border:solid #ddd;border-width:1.500px 1.500px 0 0;transform:rotate(45deg)}
li i{width:12px;height:12px;border:1px solid #aaa;border-radius:2px;margin-right:8px;margin-left:-1px}
li u{width:18px}
.warn{margin-left:10px}
.dbar{width:8px;height:362px;background:#858585;margin-top:86px}
.status{height:25px;border-top:1px solid #666;border-bottom:1px solid #000;display:flex;align-items:center;padding:1px 18px 0 4px;color:#d5d5d5;font-size:11.600px}
.status span:first-child{margin-right:auto}
.zoom{width:53px;padding-left:10px}
.taskbar{height:40px;background:#1c1c1c;display:flex;align-items:center}
.start{width:48px;padding-left:16px}
.tsearch{width:288px;height:40px;background:#f1f1f1;border:1px solid #bbb;color:#333;display:flex;align-items:center;font-size:14px;letter-spacing:-.05px;padding-left:11px}
.tsearch span{margin-left:10px;width:175px}
.apps{display:flex;height:40px;margin-left:2.500px}
.apps div{width:49px;display:flex;align-items:center;justify-content:center;position:relative}
.apps .run{border-bottom:2px solid #76b9ed;width:41px;margin:0 4px}
.apps .sel{width:48px;background:#484848;margin:0}
.wa em,.note em{position:absolute;font-style:normal;font-size:12px;font-weight:600;width:20px;height:16px;line-height:14px;border:1px solid #888;border-radius:8px;background:#2a2a2a;text-align:center;right:3px;top:19px}
.weather{margin-left:114.500px}
.temp{font-size:13px;margin-left:8px;width:38px}
.cond{font-size:13px;width:102px;letter-spacing:.1px}
.eng{font-size:12px;margin-left:8px;width:31px;letter-spacing:-.3px}
.clock{display:flex;flex-direction:column;align-items:center;width:66px;margin-left:1px;font-size:11.500px;line-height:18px;letter-spacing:-.2px}
.note{position:relative;margin-left:14px}
.note em{left:7px;top:7px;width:17px;height:17px;line-height:15px}
```
